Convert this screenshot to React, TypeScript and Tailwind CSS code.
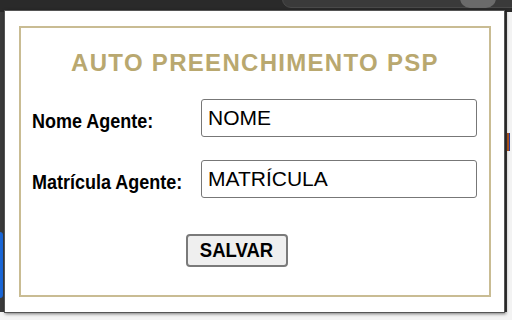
import React from "react";

export default function App() {
  return (
    <div className="relative w-[512px] h-[320px] overflow-hidden bg-[#f3f3f3]" style={{ fontFamily: '"Liberation Sans", Arial, sans-serif' }}>
      {/* browser toolbar behind */}
      <div className="absolute left-0 top-0 w-[512px] h-[12px] bg-[#2a2a2a]">
        <div className="absolute left-[282px] top-[-10px] w-[260px] h-[18px] rounded-[10px] bg-[#3a3a3a] border border-[#4a4a4a]" />
        <div className="absolute left-[460px] top-[-12px] w-[36px] h-[20px] rounded-full bg-[#6a6a6a]" />
      </div>
      <div className="absolute left-0 top-[12px] w-[4px] h-[300px] bg-[#3b3b3b]" />
      <div className="absolute left-0 top-[232px] w-[3px] h-[66px] rounded-r bg-[#1a66d6]" />
      <div className="absolute left-[505px] top-[12px] w-[2px] h-[300px] bg-[#3a3a3a]" />
      <div className="absolute left-[507px] top-[133px] w-[3px] h-[18px] bg-[#b0551b] border-r border-[#2a3fa0]" />

      {/* popup */}
      <div className="absolute left-[4px] top-[10px] w-[501px] h-[303px] bg-white border border-[#555] shadow-[1px_1px_3px_rgba(0,0,0,0.5)] pl-[14px] pr-[13px] pt-[15px] pb-[15px]">
        <div className="w-full h-full border-2 border-[#c9bc93] flex flex-col items-center">
          <h1 className="mt-[23px] text-[24px] font-bold text-[#b9a86f] tracking-[1.3px] leading-none whitespace-nowrap">AUTO PREENCHIMENTO PSP</h1>
          <div className="mt-[24px] w-full pl-[11px] pr-[12px] flex flex-col gap-[23px]">
            <div className="flex items-center">
              <span className="w-[169px] pt-[5px] text-[18px] font-bold text-black scale-y-[1.1] whitespace-nowrap leading-none">Nome Agente:</span>
              <div className="w-[276px] h-[38px] border border-[#777] rounded-[3px] pl-[6px] flex items-center text-[21px] text-black">NOME</div>
            </div>
            <div className="flex items-center">
              <span className="w-[169px] pt-[5px] text-[18px] font-bold text-black scale-y-[1.1] whitespace-nowrap leading-none">Matrícula Agente:</span>
              <div className="w-[276px] h-[38px] border border-[#777] rounded-[3px] pl-[6px] flex items-center text-[21px] text-black">MATRÍCULA</div>
            </div>
          </div>
          <button className="mt-[36px] ml-[-37px] w-[102px] h-[33px] bg-[#efefef] border-2 border-[#7a7a7a] rounded-[4px] text-[18.5px] font-bold text-black leading-none">
            <span className="inline-block scale-y-[1.1]">SALVAR</span>
          </button>
        </div>
      </div>
    </div>
  );
}
